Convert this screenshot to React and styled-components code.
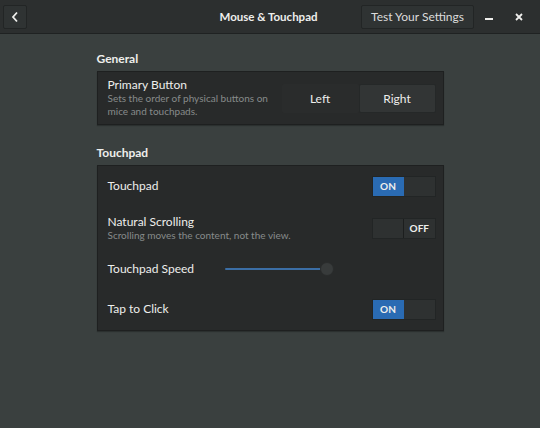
import styled, { createGlobalStyle } from 'styled-components';

const GlobalStyle = createGlobalStyle`
  body {
    margin: 0;
    background: #3a403f;
    font-family: Lato, 'Open Sans', sans-serif;
    color: #eeeeec;
  }
`;

const StyledWindow = styled.div`
  width: 540px;
  height: 428px;
  background: #3a403f;
  overflow: hidden;
`;

const StyledHeaderBar = styled.header`
  height: 33px;
  display: grid;
  grid-template-columns: 1fr auto 1fr;
  align-items: center;
  padding: 0 6px 0 3px;
  background: #2c2f2f;
  border-bottom: 1px solid #1f2222;
  box-sizing: content-box;
`;

const StyledHeaderSide = styled.div`
  display: flex;
  align-items: center;
  justify-content: ${({ $end }) => ($end ? 'flex-end' : 'flex-start')};
`;

const StyledHeaderButton = styled.button`
  height: 24px;
  min-width: 24px;
  padding: ${({ $wide }) => ($wide ? '0 9px' : '0')};
  display: flex;
  align-items: center;
  justify-content: center;
  background: #2f3333;
  border: 1px solid #222525;
  border-radius: 2px;
  color: #dcdcdc;
  font-family: inherit;
  font-size: 12px;
`;

const StyledTitle = styled.h1`
  margin: 0;
  text-align: center;
  font-size: 11.5px;
  font-weight: 700;
  color: #eeeeec;
`;

const StyledWindowControl = styled.span`
  width: 30px;
  display: flex;
  justify-content: center;
`;

const StyledMain = styled.main`
  display: flex;
  flex-direction: column;
  align-items: center;
  padding-top: 18px;
`;

const StyledSection = styled.section`
  width: 347px;
  margin-bottom: 21px;
`;

const StyledSectionTitle = styled.h2`
  margin: 0 0 5px;
  font-size: 12px;
  font-weight: 700;
  line-height: 14px;
`;

const StyledFrame = styled.div`
  background: #282a2a;
  border: 1px solid #1e2020;
  box-shadow: 0 1px 1px rgba(0, 0, 0, 0.25);
`;

const StyledRow = styled.div`
  height: ${({ $h }) => $h}px;
  display: flex;
  align-items: center;
  padding: 0 7px 0 10px;
  box-sizing: border-box;
`;

const StyledLabels = styled.div`
  flex: 1;
  display: flex;
  flex-direction: column;
`;

const StyledLabel = styled.span`
  font-size: 12px;
  line-height: 14px;
  color: #eeeeec;
`;

const StyledSub = styled.span`
  font-size: 10px;
  line-height: 13px;
  color: #878b8b;
  max-width: ${({ $wrap }) => ($wrap ? '170px' : 'none')};
`;

const StyledSegmented = styled.div`
  display: flex;
  height: 29px;
`;

const StyledSegment = styled.button`
  width: 77px;
  border: 1px solid ${({ $active }) => ($active ? '#252828' : 'transparent')};
  background: ${({ $active }) => ($active ? '#323535' : '#2a2c2c')};
  color: #eeeeec;
  font-family: inherit;
  font-size: 12px;
  border-radius: 2px;
`;

const StyledSwitch = styled.div`
  width: 64px;
  height: 21px;
  display: flex;
  background: #2e3131;
  border: 1px solid #222525;
  box-sizing: border-box;
`;

const StyledSwitchHalf = styled.div`
  flex: 1;
  display: flex;
  align-items: center;
  justify-content: center;
  font-size: 10px;
  font-weight: 700;
  color: #eeeeec;
  background: ${({ $on }) => ($on ? '#2a6bb3' : 'transparent')};
  border-right: ${({ $divider }) => ($divider ? '1px solid #1c1e1e' : 'none')};
`;

const StyledSlider = styled.div`
  width: 109px;
  height: 16px;
  margin-right: 102px;
  display: flex;
  align-items: center;
`;

const StyledTrack = styled.div`
  flex: 1;
  height: 2px;
  background: #3b6ea5;
  border-radius: 1px;
`;

const StyledKnob = styled.div`
  width: 14px;
  height: 14px;
  border-radius: 50%;
  background: #383b3b;
  border: 1px solid #2a2c2c;
  box-sizing: border-box;
  margin-left: -1px;
`;

const Switch = ({ on }) => (
  <StyledSwitch>
    {on ? (
      <>
        <StyledSwitchHalf $on>ON</StyledSwitchHalf>
        <StyledSwitchHalf />
      </>
    ) : (
      <>
        <StyledSwitchHalf $divider />
        <StyledSwitchHalf>OFF</StyledSwitchHalf>
      </>
    )}
  </StyledSwitch>
);

const App = () => {
  return (
    <>
      <GlobalStyle />
      <StyledWindow>
        <StyledHeaderBar>
          <StyledHeaderSide>
            <StyledHeaderButton aria-label="Back">
              <svg width="8" height="12" viewBox="0 0 8 12">
                <path d="M6 1.5 L2 6 L6 10.5" fill="none" stroke="#eeeeec" strokeWidth="1.8" />
              </svg>
            </StyledHeaderButton>
          </StyledHeaderSide>
          <StyledTitle>Mouse &amp; Touchpad</StyledTitle>
          <StyledHeaderSide $end>
            <StyledHeaderButton $wide>Test Your Settings</StyledHeaderButton>
            <StyledWindowControl>
              <svg width="8" height="8" viewBox="0 0 8 8">
                <rect x="0" y="5" width="8" height="2" fill="#eeeeec" />
              </svg>
            </StyledWindowControl>
            <StyledWindowControl>
              <svg width="8" height="8" viewBox="0 0 8 8">
                <path d="M1 1 L7 7 M7 1 L1 7" stroke="#eeeeec" strokeWidth="1.8" />
              </svg>
            </StyledWindowControl>
          </StyledHeaderSide>
        </StyledHeaderBar>

        <StyledMain>
          <StyledSection>
            <StyledSectionTitle>General</StyledSectionTitle>
            <StyledFrame>
              <StyledRow $h={52}>
                <StyledLabels>
                  <StyledLabel>Primary Button</StyledLabel>
                  <StyledSub $wrap>Sets the order of physical buttons on mice and touchpads.</StyledSub>
                </StyledLabels>
                <StyledSegmented>
                  <StyledSegment>Left</StyledSegment>
                  <StyledSegment $active>Right</StyledSegment>
                </StyledSegmented>
              </StyledRow>
            </StyledFrame>
          </StyledSection>

          <StyledSection>
            <StyledSectionTitle>Touchpad</StyledSectionTitle>
            <StyledFrame>
              <StyledRow $h={40}>
                <StyledLabels>
                  <StyledLabel>Touchpad</StyledLabel>
                </StyledLabels>
                <Switch on />
              </StyledRow>
              <StyledRow $h={44}>
                <StyledLabels>
                  <StyledLabel>Natural Scrolling</StyledLabel>
                  <StyledSub>Scrolling moves the content, not the view.</StyledSub>
                </StyledLabels>
                <Switch on={false} />
              </StyledRow>
              <StyledRow $h={38}>
                <StyledLabels>
                  <StyledLabel>Touchpad Speed</StyledLabel>
                </StyledLabels>
                <StyledSlider>
                  <StyledTrack />
                  <StyledKnob />
                </StyledSlider>
              </StyledRow>
              <StyledRow $h={42}>
                <StyledLabels>
                  <StyledLabel>Tap to Click</StyledLabel>
                </StyledLabels>
                <Switch on />
              </StyledRow>
            </StyledFrame>
          </StyledSection>
        </StyledMain>
      </StyledWindow>
    </>
  );
};

export default App;
